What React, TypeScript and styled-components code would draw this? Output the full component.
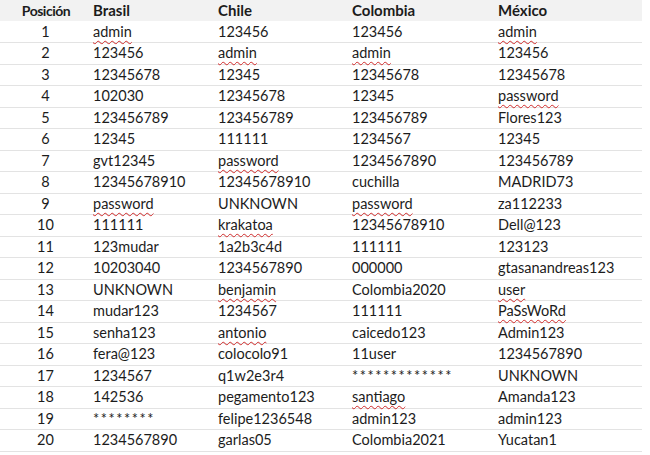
import React from 'react';
import styled, { createGlobalStyle } from 'styled-components';

const GlobalStyle = createGlobalStyle`
  html, body {
    margin: 0;
    padding: 0;
    background: #ffffff;
  }
  body {
    font-family: Lato, "Liberation Sans", sans-serif;
    color: #1c1c1c;
  }
`;

// misspelled words get Word's red squiggle, masked ones get wider stars
type Entry = string | { w: string; kind: 'bad' | 'stars' };
const bad = (w: string): Entry => ({ w, kind: 'bad' });
const stars = (n: number): Entry => ({ w: '*'.repeat(n), kind: 'stars' });

const countries = ['Brasil', 'Chile', 'Colombia', 'México'];

const rows: Entry[][] = [
  [bad('admin'), '123456', '123456', bad('admin')],
  ['123456', bad('admin'), bad('admin'), '123456'],
  ['12345678', '12345', '12345678', '12345678'],
  ['102030', '12345678', '12345', bad('password')],
  ['123456789', '123456789', '123456789', 'Flores123'],
  ['12345', '111111', '1234567', '12345'],
  ['gvt12345', bad('password'), '1234567890', '123456789'],
  ['12345678910', '12345678910', 'cuchilla', 'MADRID73'],
  [bad('password'), 'UNKNOWN', bad('password'), 'za112233'],
  ['111111', bad('krakatoa'), '12345678910', 'Dell@123'],
  ['123mudar', '1a2b3c4d', '111111', '123123'],
  ['10203040', '1234567890', '000000', 'gtasanandreas123'],
  ['UNKNOWN', bad('benjamin'), 'Colombia2020', bad('user')],
  ['mudar123', '1234567', '111111', bad('PaSsWoRd')],
  ['senha123', bad('antonio'), 'caicedo123', 'Admin123'],
  ['fera@123', 'colocolo91', '11user', '1234567890'],
  ['1234567', 'q1w2e3r4', stars(13), 'UNKNOWN'],
  ['142536', 'pegamento123', bad('santiago'), 'Amanda123'],
  [stars(8), 'felipe1236548', 'admin123', 'admin123'],
  ['1234567890', 'garlas05', 'Colombia2021', 'Yucatan1'],
];

const renderEntry = (e: Entry) => {
  if (typeof e === 'string') return e;
  if (e.kind === 'stars') return <Stars>{e.w}</Stars>;
  return <Misspelled>{e.w}</Misspelled>;
};

const App = () => {
  return (
    <>
      <GlobalStyle />
      <Table>
        <colgroup>
          <Col $w={88} />
          <Col $w={125} />
          <Col $w={134} />
          <Col $w={146} />
          <Col $w={149} />
        </colgroup>
        <thead>
          <tr>
            <HeadCell $center>Posición</HeadCell>
            {countries.map((c) => (
              <HeadCell key={c}>{c}</HeadCell>
            ))}
          </tr>
        </thead>
        <tbody>
          {rows.map((r, i) => (
            <Row key={i}>
              <Cell $center>{i + 1}</Cell>
              {r.map((e, j) => (
                <Cell key={j}>{renderEntry(e)}</Cell>
              ))}
            </Row>
          ))}
        </tbody>
      </Table>
    </>
  );
};

const Table = styled.table`
  width: 642px;
  border-collapse: collapse;
  table-layout: fixed;
  font-size: 14.5px;
`;

const Col = styled.col<{ $w: number }>`
  width: ${(p) => p.$w}px;
`;

const HeadCell = styled.th<{ $center?: boolean }>`
  height: 21px;
  padding: 0 0 0 ${(p) => (p.$center ? 4 : 5)}px;
  text-align: ${(p) => (p.$center ? 'center' : 'left')};
  font-size: ${(p) => (p.$center ? 14 : 15)}px;
  letter-spacing: ${(p) => (p.$center ? -0.5 : 0)}px;
  font-weight: 700;
  background: #f2f2f2;
  line-height: 21px;
`;

const Row = styled.tr`
  height: 21.5px;
  border-bottom: 1px solid #e3e3e3;
`;

const Cell = styled.td<{ $center?: boolean }>`
  padding: 0 0 0 ${(p) => (p.$center ? 3 : 5)}px;
  line-height: 20px;
  text-align: ${(p) => (p.$center ? 'center' : 'left')};
  white-space: nowrap;
`;

const Misspelled = styled.span`
  text-decoration: underline wavy #d02a2a;
  text-decoration-thickness: 1px;
  text-underline-offset: 3px;
`;

const Stars = styled.span`
  letter-spacing: 1.6px;
`;

export default App;
